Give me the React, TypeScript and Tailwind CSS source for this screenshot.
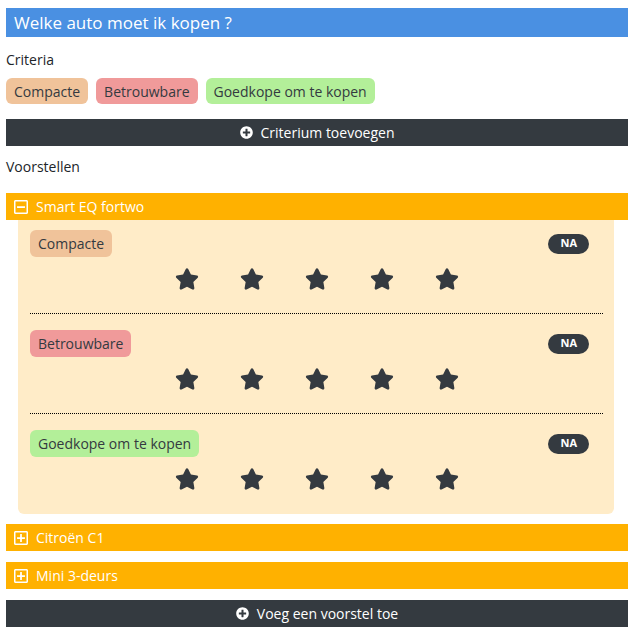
import { FaStar, FaPlusCircle, FaRegMinusSquare, FaRegPlusSquare } from "react-icons/fa";

const CRITERIA = [
  { name: "Compacte", color: "bg-[#f0c39a]" },
  { name: "Betrouwbare", color: "bg-[#f09a9a]" },
  { name: "Goedkope om te kopen", color: "bg-[#b3ef99]" },
];

function Chip({ name, color, tall = false }: { name: string; color: string; tall?: boolean }) {
  return (
    <span
      className={`inline-flex items-center px-2 rounded-md text-[14px] text-[#343a40] ${color} ${tall ? "h-[27px]" : "h-[26px]"}`}
    >
      {name}
    </span>
  );
}

function DarkButton({ label }: { label: string }) {
  return (
    <button className="w-full h-[27px] flex items-center justify-center gap-2 bg-[#343a40] text-white text-[14px]">
      <FaPlusCircle size={13} />
      {label}
    </button>
  );
}

function Proposal({ name, open }: { name: string; open?: boolean }) {
  return (
    <div>
      <div className="h-[27px] flex items-center gap-[7px] pl-[7px] bg-[#ffb100] text-white text-[14px]">
        {open ? <FaRegMinusSquare size={16} /> : <FaRegPlusSquare size={16} />}
        <span>{name}</span>
      </div>
      {open && (
        <div className="ml-3 mr-[14px] bg-[#ffecc8] rounded-b-md pt-[10px] pl-3 pr-[11px]">
          {CRITERIA.map((c, i) => (
            <div
              key={c.name}
              className={`${i < CRITERIA.length - 1 ? "pb-[23px] border-b border-dotted border-black" : "pb-6"} ${i > 0 ? "pt-4" : ""}`}
            >
              <div className="flex items-center justify-between">
                <Chip name={c.name} color={c.color} tall />
                <span className="mr-[14px] h-5 px-3 rounded-full bg-[#343a40] text-white text-[11px] font-bold flex items-center">
                  NA
                </span>
              </div>
              <div className="mt-[11px] flex justify-center">
                {[0, 1, 2, 3, 4].map((s) => (
                  <div key={s} className="w-[65px] h-[22px] flex items-center justify-center text-[#343a40]">
                    <FaStar size={24} />
                  </div>
                ))}
              </div>
            </div>
          ))}
        </div>
      )}
    </div>
  );
}

export default function App() {
  return (
    <div className="w-[637px] min-h-[638px] bg-white pl-[6px] pr-[9px] pt-2 text-[#212529]" style={{ fontFamily: "'Open Sans', sans-serif" }}>
      <div className="h-[29px] flex items-center pl-2 bg-[#4a90e2] text-white text-[17px]">
        Welke auto moet ik kopen ?
      </div>
      <div className="mt-[13px] h-5 leading-5 text-[14px]">Criteria</div>
      <div className="mt-2 flex gap-2">
        {CRITERIA.map((c) => (
          <Chip key={c.name} name={c.name} color={c.color} />
        ))}
      </div>
      <div className="mt-[15px]">
        <DarkButton label="Criterium toevoegen" />
      </div>
      <div className="mt-[11px] h-5 leading-5 text-[14px]">Voorstellen</div>
      <div className="mt-4">
        <Proposal name="Smart EQ fortwo" open />
      </div>
      <div className="mt-[10px]">
        <Proposal name="Citroën C1" />
      </div>
      <div className="mt-[11px]">
        <Proposal name="Mini 3-deurs" />
      </div>
      <div className="mt-[11px]">
        <DarkButton label="Voeg een voorstel toe" />
      </div>
    </div>
  );
}
